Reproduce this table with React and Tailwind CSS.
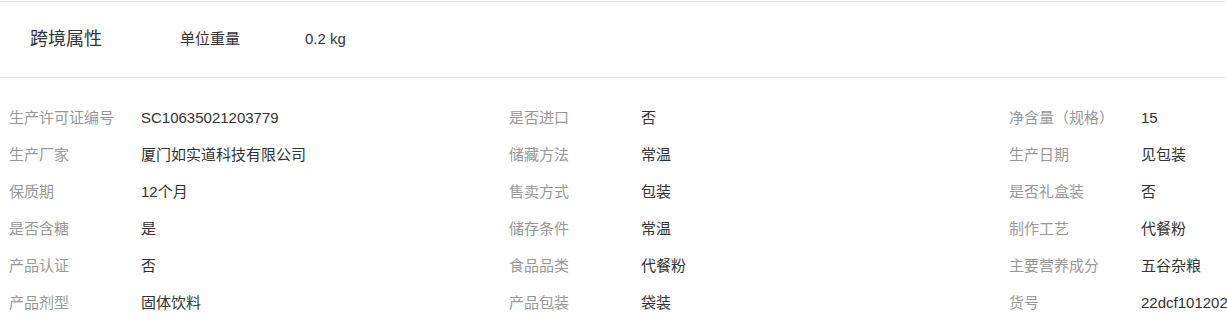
import React from 'react';

const rows = [
  ['生产许可证编号', 'SC10635021203779', '是否进口', '否', '净含量（规格）', '15'],
  ['生产厂家', '厦门如实道科技有限公司', '储藏方法', '常温', '生产日期', '见包装'],
  ['保质期', '12个月', '售卖方式', '包装', '是否礼盒装', '否'],
  ['是否含糖', '是', '储存条件', '常温', '制作工艺', '代餐粉'],
  ['产品认证', '否', '食品品类', '代餐粉', '主要营养成分', '五谷杂粮'],
  ['产品剂型', '固体饮料', '产品包装', '袋装', '货号', '22dcf101202'],
];

function Cell({ label, value }) {
  return (
    <div className="flex items-center h-[37px] w-[500px]">
      <span className="w-[132px] shrink-0 text-[#999]">{label}</span>
      <span className="text-[#333] whitespace-nowrap">{value}</span>
    </div>
  );
}

export default function App() {
  return (
    <div
      className="w-[1227px] h-[327px] overflow-hidden bg-white pt-px text-[15px]"
      style={{ fontFamily: '"Liberation Sans", "Noto Sans CJK SC", sans-serif' }}
    >
      <div className="w-[1226px] h-[77px] border-t border-b border-[#e5e5e5] flex items-center text-[#333]">
        <span className="ml-[30px] w-[150px] text-[18px]">跨境属性</span>
        <span className="w-[125px] text-[15px]">单位重量</span>
        <span className="text-[15px]">0.2 kg</span>
      </div>

      <div className="pl-[9px] pt-[22px] w-[1600px]">
        {rows.map((r, i) => (
          <div key={i} className="flex">
            <Cell label={r[0]} value={r[1]} />
            <Cell label={r[2]} value={r[3]} />
            <Cell label={r[4]} value={r[5]} />
          </div>
        ))}
      </div>
    </div>
  );
}
